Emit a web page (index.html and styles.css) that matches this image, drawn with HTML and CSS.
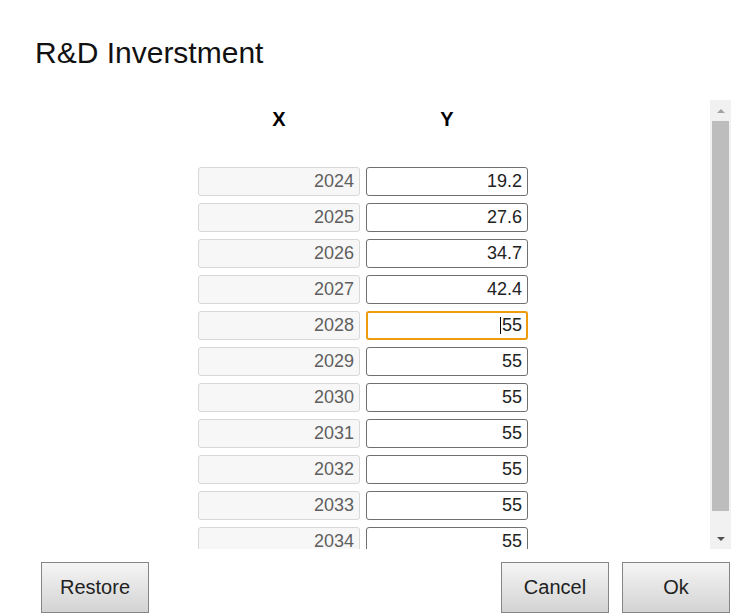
FILE: index.html
```html
<!DOCTYPE html>
<html>
<head>
<meta charset="utf-8">
<link rel="stylesheet" href="styles.css">
</head>
<body>
<div class="dialog">
  <h1 class="title">R&amp;D Inverstment</h1>
  <div class="scroll-area">
    <div class="list">
      <div class="grid">
        <div class="head">X</div><div class="head">Y</div>
        <div class="cell x">2024</div><div class="cell y">19.2</div>
        <div class="cell x">2025</div><div class="cell y">27.6</div>
        <div class="cell x">2026</div><div class="cell y">34.7</div>
        <div class="cell x">2027</div><div class="cell y">42.4</div>
        <div class="cell x">2028</div><div class="cell y focus"><span class="caret"></span>55</div>
        <div class="cell x">2029</div><div class="cell y">55</div>
        <div class="cell x">2030</div><div class="cell y">55</div>
        <div class="cell x">2031</div><div class="cell y">55</div>
        <div class="cell x">2032</div><div class="cell y">55</div>
        <div class="cell x">2033</div><div class="cell y">55</div>
        <div class="cell x">2034</div><div class="cell y">55</div>
      </div>
    </div>
    <div class="scrollbar">
      <div class="sb-btn"><span class="tri up"></span></div>
      <div class="thumb"></div>
      <div class="sb-space"></div>
      <div class="sb-btn"><span class="tri down"></span></div>
    </div>
  </div>
  <div class="footer">
    <button class="btn">Restore</button>
    <div class="right">
      <button class="btn">Cancel</button>
      <button class="btn">Ok</button>
    </div>
  </div>
</div>
</body>
</html>
```

FILE: styles.css
```css
* { box-sizing: border-box; }
html, body {
  margin: 0;
  padding: 0;
  background: #ffffff;
  font-family: "Liberation Sans", Arial, sans-serif;
  color: #222;
}
.dialog {
  width: 736px;
  height: 616px;
  padding-top: 36px;
  overflow: hidden;
}
.title {
  margin: 0 0 30px 35px;
  font-size: 30px;
  line-height: 34px;
  font-weight: normal;
  color: #111;
}
.scroll-area {
  display: flex;
  width: 731px;
  height: 449px;
}
.list {
  flex: 1;
  overflow: hidden;
  padding-left: 198px;
}
.grid {
  display: grid;
  grid-template-columns: 162px 162px;
  column-gap: 6px;
  row-gap: 7px;
}
.head {
  height: 60px;
  line-height: 38px;
  text-align: center;
  font-weight: bold;
  font-size: 20px;
  color: #000;
}
.cell {
  height: 29px;
  border: 1px solid #d8d8d8;
  border-radius: 3px;
  font-size: 18px;
  line-height: 27px;
  text-align: right;
  padding: 0 5px;
}
.cell.x {
  background: #f7f7f7;
  color: #5f5f5f;
}
.cell.y {
  background: #fff;
  border-color: #707070;
  color: #222;
}
.cell.y.focus {
  border: 2px solid #ec9c0c;
  line-height: 25px;
  padding: 0 4px;
}
.caret {
  display: inline-block;
  width: 1px;
  height: 17px;
  background: #000;
  vertical-align: -3px;
  margin-right: 1px;
}
.scrollbar {
  width: 21px;
  background: #f1f1f1;
  display: flex;
  flex-direction: column;
  padding: 0 2px;
}
.sb-btn {
  height: 21px;
  display: flex;
  align-items: center;
  justify-content: center;
}
.thumb {
  height: 390px;
  background: #bdbdbd;
}
.sb-space { flex: 1; }
.tri {
  width: 0;
  height: 0;
  border-left: 4px solid transparent;
  border-right: 4px solid transparent;
}
.tri.up { border-bottom: 4px solid #a3a3a3; }
.tri.down { border-top: 4px solid #505050; }
.footer {
  display: flex;
  justify-content: space-between;
  margin-top: 13px;
  padding: 0 6px 0 41px;
}
.right {
  display: flex;
  gap: 13px;
}
.btn {
  width: 108px;
  height: 51px;
  border: 1px solid #858585;
  border-radius: 0;
  background: linear-gradient(#f5f5f5, #d3d3d3);
  font-family: "Liberation Sans", Arial, sans-serif;
  font-size: 20px;
  color: #222;
  padding: 0;
}
```
